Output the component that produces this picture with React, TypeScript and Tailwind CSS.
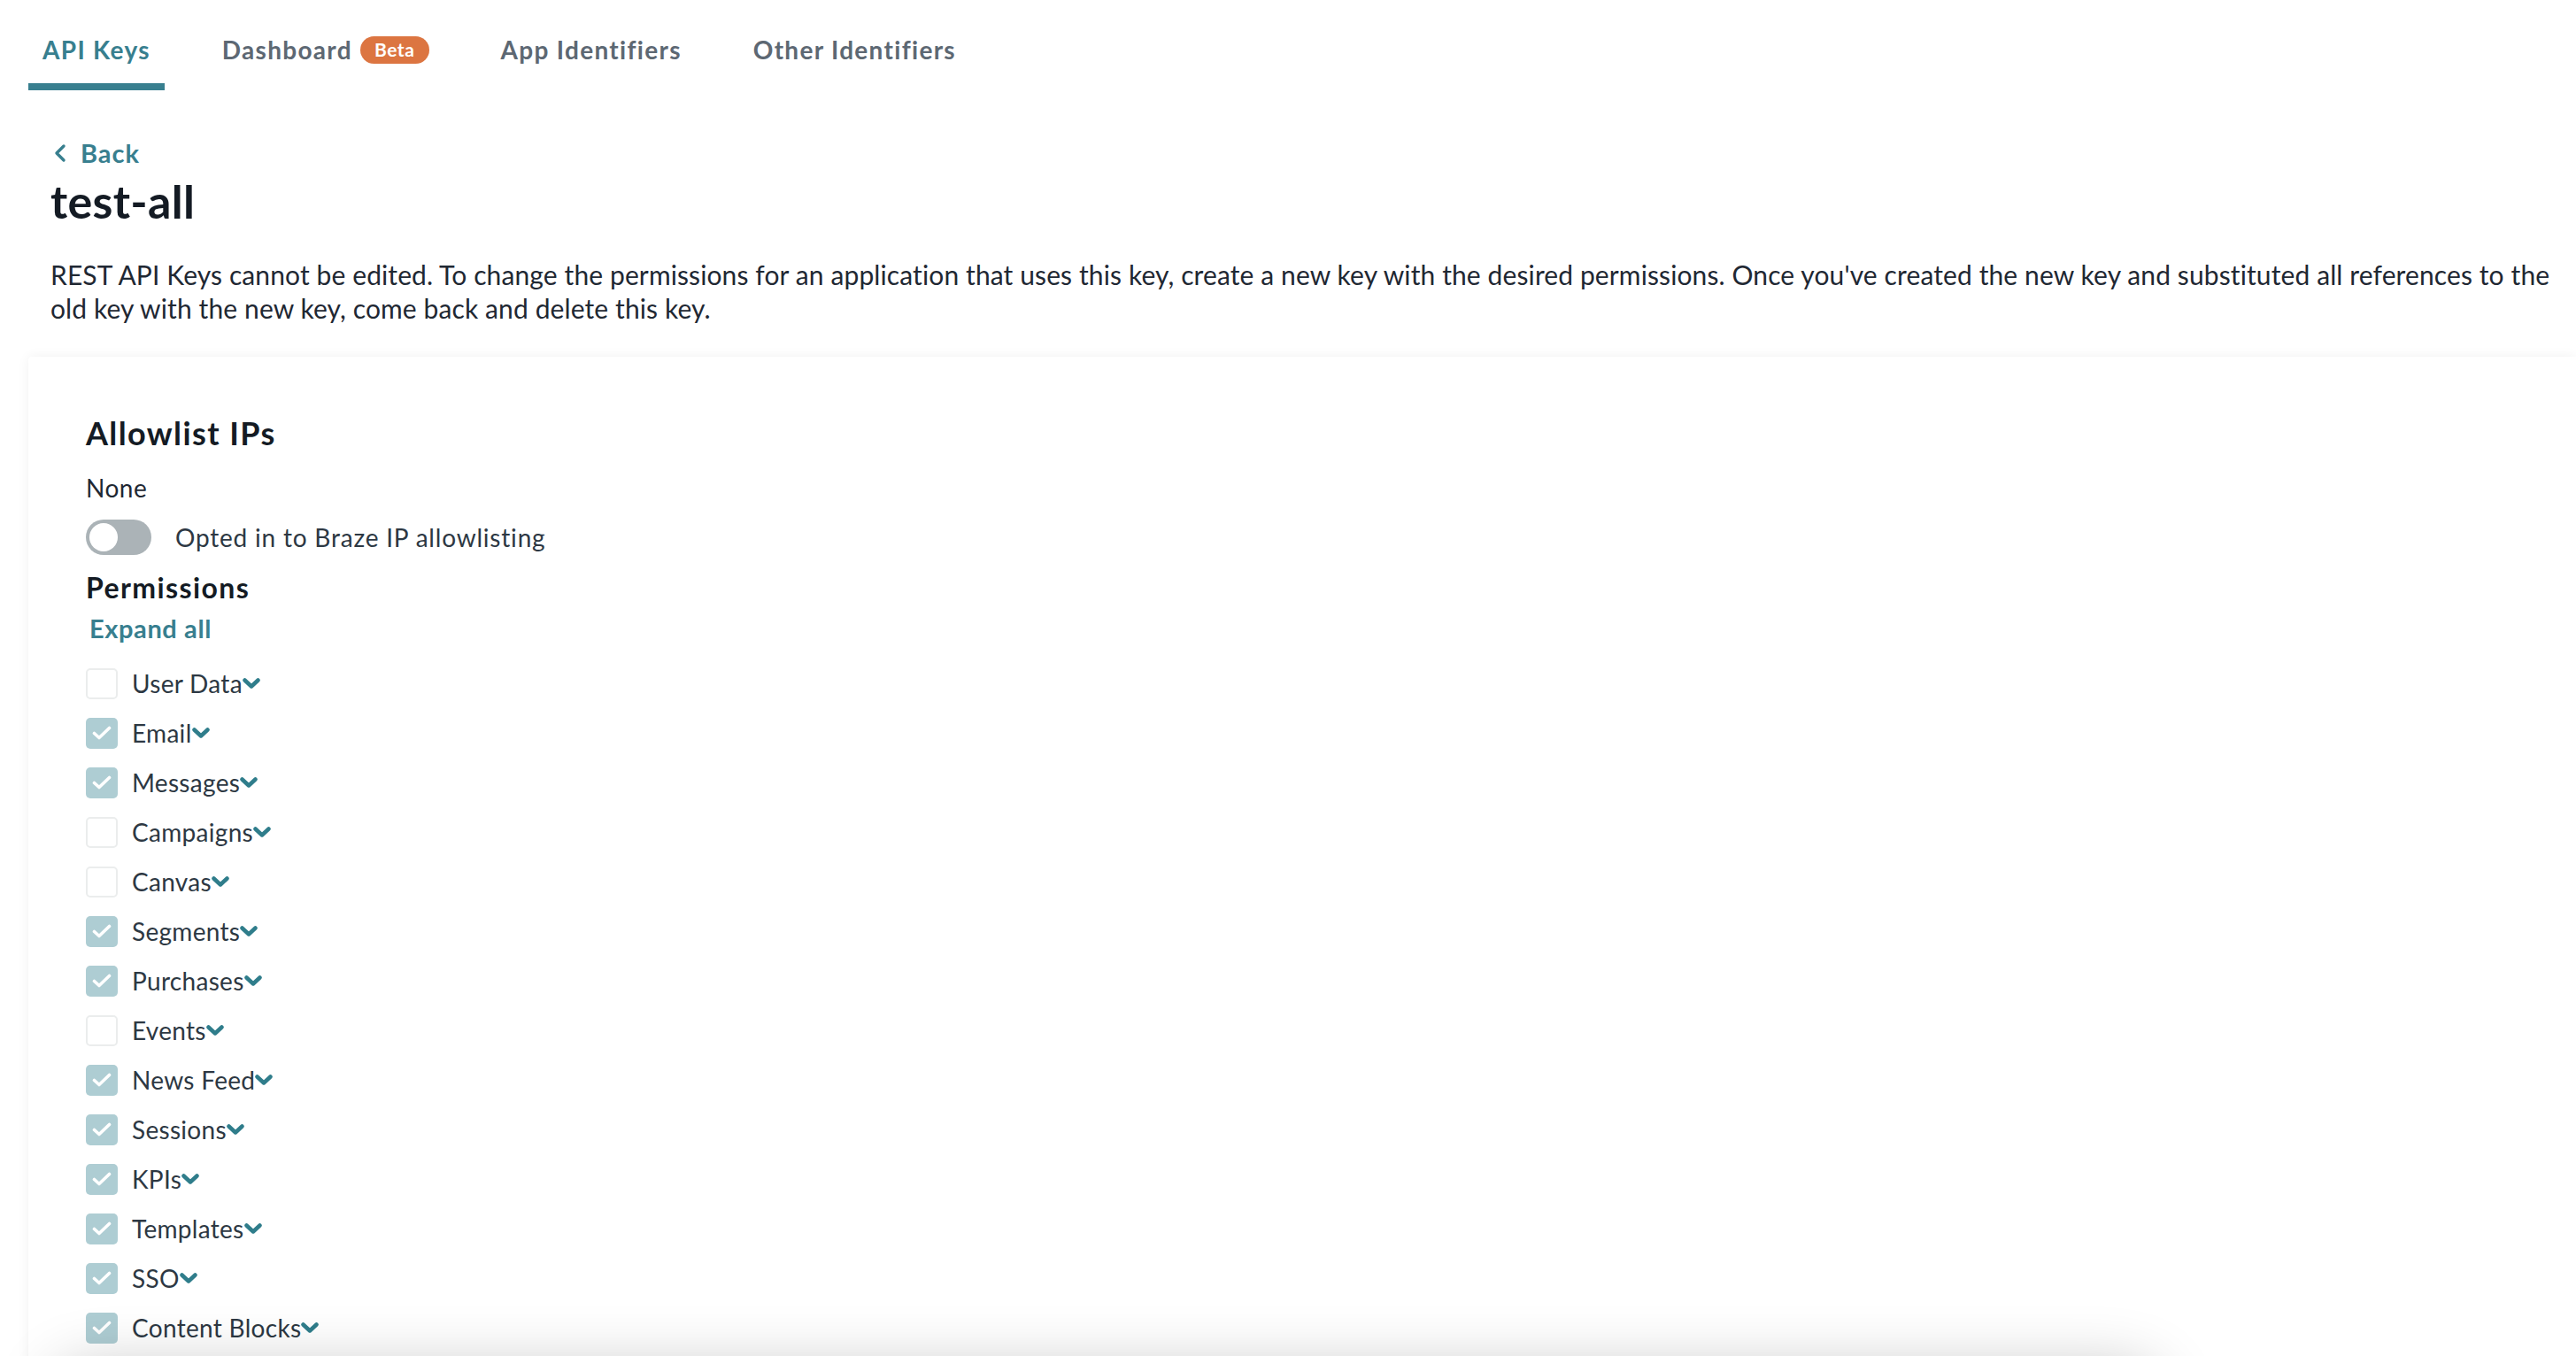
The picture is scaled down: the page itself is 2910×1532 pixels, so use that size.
const permissions: { name: string; checked: boolean }[] = [
  { name: 'User Data', checked: false },
  { name: 'Email', checked: true },
  { name: 'Messages', checked: true },
  { name: 'Campaigns', checked: false },
  { name: 'Canvas', checked: false },
  { name: 'Segments', checked: true },
  { name: 'Purchases', checked: true },
  { name: 'Events', checked: false },
  { name: 'News Feed', checked: true },
  { name: 'Sessions', checked: true },
  { name: 'KPIs', checked: true },
  { name: 'Templates', checked: true },
  { name: 'SSO', checked: true },
  { name: 'Content Blocks', checked: true },
]

const tabs = [
  { label: 'API Keys', active: true },
  { label: 'Dashboard', beta: true },
  { label: 'App Identifiers' },
  { label: 'Other Identifiers' },
]

function Caret() {
  return (
    <svg width="20" height="12" viewBox="0 0 20 12" className="shrink-0">
      <polyline points="2.5,2.5 10,9.5 17.5,2.5" fill="none" stroke="#2f7d8b" strokeWidth="4.5" strokeLinecap="round" strokeLinejoin="round" />
    </svg>
  )
}

function Checkbox({ checked }: { checked: boolean }) {
  if (!checked) {
    return <div className="w-[36px] h-[35px] rounded-[5px] border-2 border-[#ebeded] bg-white shrink-0" />
  }
  return (
    <div className="w-[36px] h-[35px] rounded-[5px] bg-[#aecdd3] flex items-center justify-center shrink-0">
      <svg width="22" height="16" viewBox="0 0 22 16">
        <polyline points="2.5,8.5 8,13.5 19.5,2.5" fill="none" stroke="white" strokeWidth="3.6" strokeLinecap="round" strokeLinejoin="round" />
      </svg>
    </div>
  )
}

export default function App() {
  return (
    <div className="relative h-[1532px] overflow-hidden bg-white font-['Lato',sans-serif]">
      {/* tabs */}
      <div className="flex gap-[49px] pl-8">
        {tabs.map((t) => (
          <div
            key={t.label}
            className={`flex items-center px-4 pt-[36px] pb-[18px] border-b-8 ${t.active ? 'border-[#387f8f] text-[#387f8f]' : 'border-transparent text-[#5d6873]'}`}
          >
            <span className="text-[28px] leading-[40px] font-bold tracking-[1.3px]">{t.label}</span>
            {t.beta && (
              <span className="ml-[9px] h-[31px] px-[16px] rounded-full bg-[#dc7541] text-white text-[21px] font-bold tracking-[0.6px] flex items-center">
                Beta
              </span>
            )}
          </div>
        ))}
      </div>

      <div className="pl-[57px] pr-[10px]">
        <div className="mt-[51px] flex items-center gap-[14px] text-[#387f8f]">
          <svg width="18" height="22" viewBox="0 0 18 22" className="ml-[2px]">
            <polyline points="13,3 5,11 13,19" fill="none" stroke="#387f8f" strokeWidth="3.4" strokeLinecap="round" strokeLinejoin="round" />
          </svg>
          <span className="text-[29px] leading-[40px] font-bold tracking-[1px]">Back</span>
        </div>
        <h1 className="mt-[4px] text-[52px] leading-[60px] font-bold text-[#141b24] tracking-[0.3px]">test-all</h1>
        <p className="mt-[34px] text-[30px] leading-[38px] text-[#1f2833] tracking-[0.11px]">
          REST API Keys cannot be edited. To change the permissions for an application that uses this key, create a new key with the desired permissions. Once you've created the new key and substituted all references to the old key with the new key, come back and delete this key.
        </p>
      </div>

      {/* card */}
      <div className="ml-8 mt-[36px] bg-white rounded-tl-[4px] shadow-[0_0_14px_rgba(0,0,0,0.06)] pl-[65px] pt-[64px] pb-16">
        <h2 className="text-[36px] leading-[44px] font-bold text-[#141b24] tracking-[1.4px]">Allowlist IPs</h2>
        <div className="mt-[22px] text-[28px] leading-[36px] text-[#1f2833] tracking-[0.5px]">None</div>
        <div className="mt-[18px] flex items-center gap-[27px]">
          <div className="w-[74px] h-[40px] rounded-full bg-[#abb3b7] p-[4px] flex items-center">
            <div className="w-[32px] h-[32px] rounded-full bg-white" />
          </div>
          <span className="text-[28px] leading-[36px] text-[#2d3843] tracking-[0.8px]">Opted in to Braze IP allowlisting</span>
        </div>
        <h3 className="mt-[17px] text-[32px] leading-[40px] font-bold text-[#141b24] tracking-[1.4px]">Permissions</h3>
        <button className="mt-[8px] ml-[4px] block text-[29px] leading-[36px] font-bold text-[#387f8f] tracking-[0.6px]">Expand all</button>
        <div className="mt-[26px] flex flex-col gap-[20px]">
          {permissions.map((p) => (
            <div key={p.name} className="flex items-center gap-[16px]">
              <Checkbox checked={p.checked} />
              <div className="flex items-center">
                <span className="text-[28px] leading-[36px] text-[#2d3843] tracking-[0.3px]">{p.name}</span>
                <Caret />
              </div>
            </div>
          ))}
        </div>
      </div>

      {/* shadow of the footer bar just below the fold */}
      <div className="absolute left-[60px] w-[2380px] top-[1546px] h-[80px] rounded-[40px] bg-white shadow-[0_0_70px_rgba(0,0,0,0.24)]" />
    </div>
  )
}
